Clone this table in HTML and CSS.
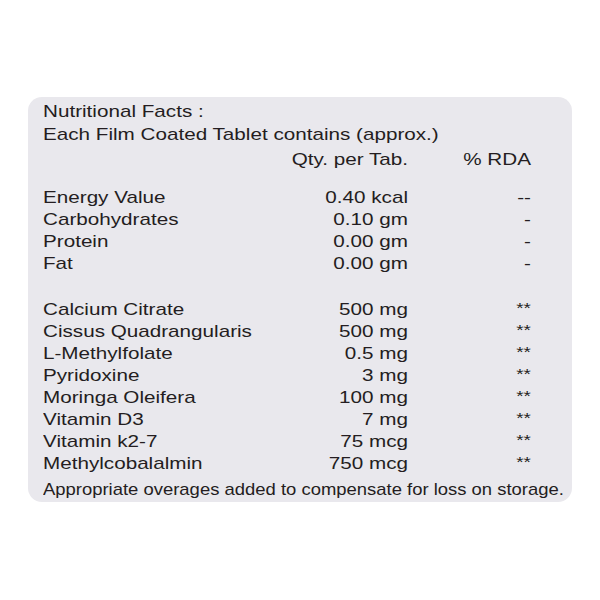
FILE: index.html
```html
<!DOCTYPE html>
<html lang="en">
<head>
<meta charset="utf-8">
<title>Nutritional Facts</title>
<link rel="stylesheet" href="styles.css">
</head>
<body>
<div class="page">
  <div class="card">
    <div class="content">
      <div class="line">Nutritional Facts :</div>
      <div class="line line-sub">Each Film Coated Tablet contains (approx.)</div>
      <div class="row row-head"><span class="name"></span><span class="qty">Qty. per Tab.</span><span class="rda">% RDA</span></div>

      <div class="group group-energy">
        <div class="row"><span class="name">Energy Value</span><span class="qty">0.40 kcal</span><span class="rda">--</span></div>
        <div class="row"><span class="name">Carbohydrates</span><span class="qty">0.10 gm</span><span class="rda">-</span></div>
        <div class="row"><span class="name">Protein</span><span class="qty">0.00 gm</span><span class="rda">-</span></div>
        <div class="row"><span class="name">Fat</span><span class="qty">0.00 gm</span><span class="rda">-</span></div>
      </div>

      <div class="group group-active">
        <div class="row"><span class="name">Calcium Citrate</span><span class="qty">500 mg</span><span class="rda star">**</span></div>
        <div class="row"><span class="name">Cissus Quadrangularis</span><span class="qty">500 mg</span><span class="rda star">**</span></div>
        <div class="row"><span class="name">L-Methylfolate</span><span class="qty">0.5 mg</span><span class="rda star">**</span></div>
        <div class="row"><span class="name">Pyridoxine</span><span class="qty">3 mg</span><span class="rda star">**</span></div>
        <div class="row"><span class="name">Moringa Oleifera</span><span class="qty">100 mg</span><span class="rda star">**</span></div>
        <div class="row"><span class="name">Vitamin D3</span><span class="qty">7 mg</span><span class="rda star">**</span></div>
        <div class="row"><span class="name">Vitamin k2-7</span><span class="qty">75 mcg</span><span class="rda star">**</span></div>
        <div class="row"><span class="name">Methylcobalalmin</span><span class="qty">750 mcg</span><span class="rda star">**</span></div>
      </div>

      <div class="line line-foot">Appropriate overages added to compensate for loss on storage.</div>
    </div>
  </div>
</div>
</body>
</html>
```

FILE: styles.css
```css
html, body {
  margin: 0;
  padding: 0;
  background: #ffffff;
}

.page {
  width: 600px;
  height: 600px;
  padding-top: 97px;
  padding-left: 28px;
  box-sizing: border-box;
}

.card {
  width: 544px;
  height: 405px;
  box-sizing: border-box;
  background: #e9e8ed;
  border-radius: 14px;
  padding: 4px 0 0 14.7px;
  overflow: hidden;
}

.content {
  width: 401.6px;
  transform: scaleX(1.215);
  transform-origin: left top;
  font-family: "Liberation Sans", Arial, sans-serif;
  font-size: 17px;
  line-height: 22px;
  color: #241d21;
  white-space: nowrap;
}

.line-sub {
  margin-top: 1px;
}

.row {
  display: grid;
  grid-template-columns: minmax(0, 1fr) 120px 101.2px;
}

.row-head {
  margin-top: 3px;
}

.qty,
.rda {
  text-align: right;
}

.star {
  font-size: 15.5px;
  line-height: 22px;
  position: relative;
  top: -2px;
}

.group-energy {
  margin-top: 16px;
}

.group-active {
  margin-top: 24px;
}

.line-foot {
  margin-top: 4px;
  transform: scaleX(0.893);
  transform-origin: left top;
}
```
